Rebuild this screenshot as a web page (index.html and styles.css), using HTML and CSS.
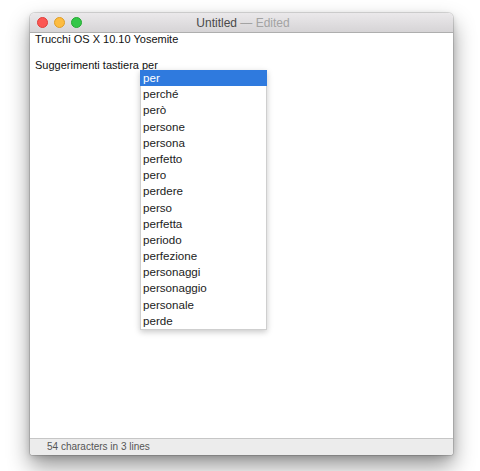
FILE: index.html
```html
<!DOCTYPE html>
<html lang="it">
<head>
<meta charset="utf-8">
<title>Untitled — Edited</title>
<link rel="stylesheet" href="styles.css">
</head>
<body>
<div class="window">
  <div class="titlebar">
    <div class="lights">
      <span class="light red"></span>
      <span class="light yellow"></span>
      <span class="light green"></span>
    </div>
    <div class="title">Untitled <span class="edited">— Edited</span></div>
  </div>
  <div class="content">
    <div class="line">Trucchi OS X 10.10 Yosemite</div>
    <div class="line">&nbsp;</div>
    <div class="line">Suggerimenti tastiera per</div>
    <ul class="menu">
      <li class="item selected">per</li>
      <li class="item">perché</li>
      <li class="item">però</li>
      <li class="item">persone</li>
      <li class="item">persona</li>
      <li class="item">perfetto</li>
      <li class="item">pero</li>
      <li class="item">perdere</li>
      <li class="item">perso</li>
      <li class="item">perfetta</li>
      <li class="item">periodo</li>
      <li class="item">perfezione</li>
      <li class="item">personaggi</li>
      <li class="item">personaggio</li>
      <li class="item">personale</li>
      <li class="item">perde</li>
    </ul>
  </div>
  <div class="status">54 characters in 3 lines</div>
</div>
</body>
</html>
```

FILE: styles.css
```css
html, body {
  margin: 0;
  padding: 0;
  background: #ffffff;
}
body {
  font-family: "Liberation Sans", Arial, sans-serif;
  padding: 13px 0 0 30px;
  height: 471px;
  box-sizing: border-box;
  overflow: hidden;
}
.window {
  width: 423px;
  height: 442px;
  display: flex;
  flex-direction: column;
  background: #ffffff;
  border-radius: 5px 5px 3px 3px;
  box-shadow: 0 0 0 1px rgba(0,0,0,0.12), 0 11px 22px rgba(0,0,0,0.42), 0 2px 6px rgba(0,0,0,0.15);
  overflow: hidden;
}
.titlebar {
  height: 19px;
  flex: none;
  position: relative;
  display: flex;
  align-items: center;
  justify-content: center;
  background: linear-gradient(#ebe9eb, #d6d4d6);
  border-bottom: 1px solid #aeaeae;
}
.lights {
  position: absolute;
  left: 7px;
  top: 4px;
  display: flex;
  gap: 6px;
}
.light {
  width: 11px;
  height: 11px;
  border-radius: 50%;
  box-sizing: border-box;
}
.red { background: #fc5753; border: 1px solid #df3e3b; }
.yellow { background: #fdbc40; border: 1px solid #de9d26; }
.green { background: #33c748; border: 1px solid #25a833; }
.title {
  font-size: 12px;
  color: #4a4a4a;
  margin-left: 3px;
}
.edited {
  color: #a3a3a3;
}
.content {
  flex: 1;
  position: relative;
  padding: 0 0 0 5px;
  font-size: 11px;
  color: #111111;
}
.line {
  line-height: 12.8px;
  height: 12.8px;
}
.menu {
  position: absolute;
  left: 110px;
  top: 37px;
  width: 125px;
  margin: 0;
  padding: 0;
  list-style: none;
  background: #ffffff;
  border: 1px solid #cfcfcf;
  border-top: none;
  box-shadow: 0 2px 6px rgba(0,0,0,0.22);
}
.item {
  height: 16.2px;
  line-height: 16.2px;
  padding-left: 2px;
  font-size: 11.6px;
  color: #222222;
}
.item.selected {
  background: #2f7ade;
  color: #ffffff;
  margin: 0 -1px;
  padding-left: 3px;
}
.status {
  height: 16px;
  flex: none;
  border-top: 1px solid #c6c6c6;
  background: #ececec;
  font-size: 10px;
  line-height: 16px;
  color: #555555;
  padding-left: 17px;
}
```
